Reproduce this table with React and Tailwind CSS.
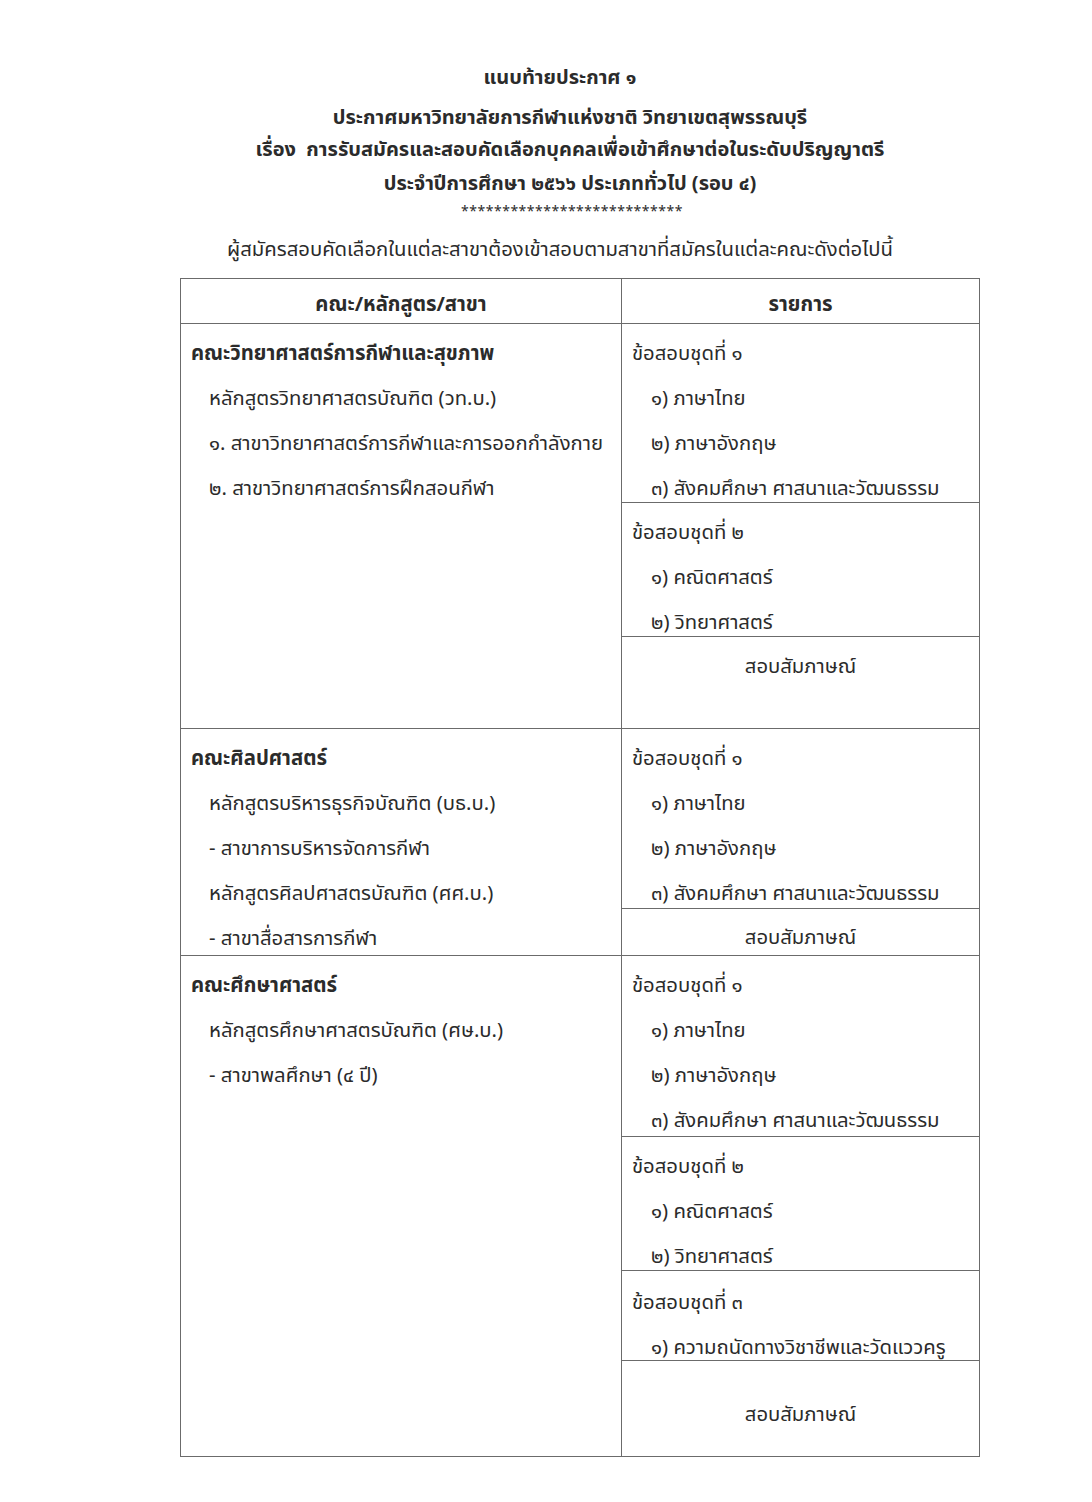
import React from "react";

const Line = ({ children, indent = 0, bold = false, center = false }) => (
  <div
    className={`h-[45px] leading-[45px] whitespace-nowrap ${bold ? "font-bold" : ""} ${
      center ? "text-center" : ""
    }`}
    style={{ paddingLeft: indent }}
  >
    {children}
  </div>
);

const Block = ({ h, pt = 7, last = false, children }) => (
  <div
    className={`px-[10px] ${last ? "flex-1" : "border-b border-[#6b6b6b]"}`}
    style={{ height: last ? undefined : h, paddingTop: pt }}
  >
    {children}
  </div>
);

const Section = ({ h, left, right }) => (
  <div className="grid grid-cols-[441px_1fr] border-b border-[#6b6b6b]" style={{ height: h }}>
    <div className="border-r border-[#6b6b6b] pl-[10px] pt-[7px]">{left}</div>
    <div className="flex flex-col">{right}</div>
  </div>
);

const thaiBasic = (
  <>
    <Line>ข้อสอบชุดที่ ๑</Line>
    <Line indent={19}>๑) ภาษาไทย</Line>
    <Line indent={19}>๒) ภาษาอังกฤษ</Line>
    <Line indent={19}>๓) สังคมศึกษา ศาสนาและวัฒนธรรม</Line>
  </>
);

const mathSci = (
  <>
    <Line>ข้อสอบชุดที่ ๒</Line>
    <Line indent={19}>๑) คณิตศาสตร์</Line>
    <Line indent={19}>๒) วิทยาศาสตร์</Line>
  </>
);

export default function App() {
  return (
    <div className="min-h-[1502px] bg-white text-[#2b2b2b] text-[20.3px] font-['Noto_Sans_Thai','Loma','Garuda','Noto_Sans',sans-serif]">
      <div className="w-[800px] ml-[180px] pt-[58px]">
        <div className="w-[760px] flex flex-col items-center text-[20px] font-bold">
          <div className="leading-[40px]">แนบท้ายประกาศ ๑</div>
          <div className="leading-[40px] ml-[20px]">
            ประกาศมหาวิทยาลัยการกีฬาแห่งชาติ วิทยาเขตสุพรรณบุรี
          </div>
          <div className="leading-[34px] -mt-[5px] ml-[20px]">
            เรื่อง&nbsp;&nbsp;การรับสมัครและสอบคัดเลือกบุคคลเพื่อเข้าศึกษาต่อในระดับปริญญาตรี
          </div>
          <div className="leading-[34px] ml-[20px]">ประจำปีการศึกษา ๒๕๖๖ ประเภททั่วไป (รอบ ๔)</div>
          <div className="leading-[22px] text-[14px] font-normal tracking-[0.5px] ml-[24px]">
            ***************************
          </div>
          <div className="leading-[40px] mt-[7px] font-normal text-[20.3px]">
            ผู้สมัครสอบคัดเลือกในแต่ละสาขาต้องเข้าสอบตามสาขาที่สมัครในแต่ละคณะดังต่อไปนี้
          </div>
        </div>

        <div className="mt-[8px] border border-[#6b6b6b]">
          <div className="grid grid-cols-[441px_1fr] h-[45px] border-b border-[#6b6b6b] leading-[45px] text-center font-bold">
            <div className="border-r border-[#6b6b6b] pt-[3px]">คณะ/หลักสูตร/สาขา</div>
            <div className="pt-[3px]">รายการ</div>
          </div>

          <Section
            h={405}
            left={
              <>
                <Line bold>คณะวิทยาศาสตร์การกีฬาและสุขภาพ</Line>
                <Line indent={18}>หลักสูตรวิทยาศาสตรบัณฑิต (วท.บ.)</Line>
                <Line indent={18}>๑. สาขาวิทยาศาสตร์การกีฬาและการออกกำลังกาย</Line>
                <Line indent={18}>๒. สาขาวิทยาศาสตร์การฝึกสอนกีฬา</Line>
              </>
            }
            right={
              <>
                <Block h={179}>{thaiBasic}</Block>
                <Block h={134}>{mathSci}</Block>
                <Block last pt={7}>
                  <Line center>สอบสัมภาษณ์</Line>
                </Block>
              </>
            }
          />

          <Section
            h={227}
            left={
              <>
                <Line bold>คณะศิลปศาสตร์</Line>
                <Line indent={18}>หลักสูตรบริหารธุรกิจบัณฑิต (บธ.บ.)</Line>
                <Line indent={18}>- สาขาการบริหารจัดการกีฬา</Line>
                <Line indent={18}>หลักสูตรศิลปศาสตรบัณฑิต (ศศ.บ.)</Line>
                <Line indent={18}>- สาขาสื่อสารการกีฬา</Line>
              </>
            }
            right={
              <>
                <Block h={180}>{thaiBasic}</Block>
                <div className="flex-1 h-[47px] text-center leading-[45px] pt-[6px] whitespace-nowrap">
                  สอบสัมภาษณ์
                </div>
              </>
            }
          />

          <div className="grid grid-cols-[441px_1fr] h-[500px]">
            <div className="border-r border-[#6b6b6b] pl-[10px] pt-[7px]">
              <Line bold>คณะศึกษาศาสตร์</Line>
              <Line indent={18}>หลักสูตรศึกษาศาสตรบัณฑิต (ศษ.บ.)</Line>
              <Line indent={18}>- สาขาพลศึกษา (๔ ปี)</Line>
            </div>
            <div className="flex flex-col">
              <Block h={181}>{thaiBasic}</Block>
              <Block h={134}>{mathSci}</Block>
              <Block h={90} pt={9}>
                <Line>ข้อสอบชุดที่ ๓</Line>
                <Line indent={19}>๑) ความถนัดทางวิชาชีพและวัดแววครู</Line>
              </Block>
              <Block last pt={31}>
                <Line center>สอบสัมภาษณ์</Line>
              </Block>
            </div>
          </div>
        </div>
      </div>
    </div>
  );
}
